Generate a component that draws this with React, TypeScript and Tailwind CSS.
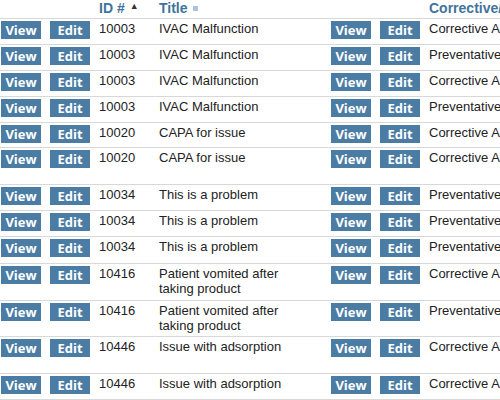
const rows = [
  { id: '10003', title: 'IVAC Malfunction', type: 'Corrective Action', h: 'h-[26px]' },
  { id: '10003', title: 'IVAC Malfunction', type: 'Preventative Action', h: 'h-[26px]' },
  { id: '10003', title: 'IVAC Malfunction', type: 'Corrective Action', h: 'h-[26px]' },
  { id: '10003', title: 'IVAC Malfunction', type: 'Preventative Action', h: 'h-[26px]' },
  { id: '10020', title: 'CAPA for issue', type: 'Corrective Action', h: 'h-[25px]' },
  { id: '10020', title: 'CAPA for issue', type: 'Corrective Action', h: 'h-[37px]' },
  { id: '10034', title: 'This is a problem', type: 'Preventative Action', h: 'h-[26px]' },
  { id: '10034', title: 'This is a problem', type: 'Preventative Action', h: 'h-[26px]' },
  { id: '10034', title: 'This is a problem', type: 'Preventative Action', h: 'h-[27px]' },
  { id: '10416', title: 'Patient vomited after taking product', type: 'Corrective Action', h: 'h-[37px]' },
  { id: '10416', title: 'Patient vomited after taking product', type: 'Preventative Action', h: 'h-[36px]' },
  { id: '10446', title: 'Issue with adsorption', type: 'Corrective Action', h: 'h-[37px]' },
  { id: '10446', title: 'Issue with adsorption', type: 'Corrective Action', h: 'h-[26px]' },
]

function Btn({ label }: { label: string }) {
  return (
    <span
      className="mt-[1px] flex h-[18px] w-[40px] items-center justify-center bg-[#4b7ca3] text-[13px] font-bold leading-none text-white"
      style={{ fontFamily: '"Open Sans", "Liberation Sans", sans-serif' }}
    >
      {label}
    </span>
  )
}

export default function App() {
  return (
    <div
      className="h-[400px] w-[500px] overflow-hidden bg-white text-[13px] leading-[15px] text-[#222]"
      style={{ fontFamily: '"Liberation Sans", Arial, sans-serif' }}
    >
      <div className="w-[700px]">
        {/* header */}
        <div className="flex h-[19px] border-b border-[#d8d8d8] text-[14px] font-bold leading-[14px] text-[#41739c]">
          <div className="w-[98px] shrink-0" />
          <div className="flex w-[60px] shrink-0 items-start pl-[1px] pt-[1px]">
            ID #
            <span className="ml-[5px] mt-[1px] text-[9px] leading-[9px] text-[#333]">▲</span>
          </div>
          <div className="flex w-[172px] shrink-0 items-start pl-[1px] pt-[1px]">
            Title
            <span className="ml-[5px] mt-[5px] h-[5px] w-[5px] bg-[#a9c3da]" />
          </div>
          <div className="w-[98px] shrink-0" />
          <div className="shrink-0 pl-[1px] pt-[1px]">Corrective/Preventative</div>
        </div>

        {rows.map((r, i) => (
          <div key={i} className={'flex items-start border-b border-[#d8d8d8] pt-[1px] ' + r.h}>
            <div className="w-[49px] shrink-0 pl-[1px]"><Btn label="View" /></div>
            <div className="w-[49px] shrink-0 pl-[1px]"><Btn label="Edit" /></div>
            <div className="w-[60px] shrink-0 pl-[1px] pt-[1px]">{r.id}</div>
            <div className="w-[172px] shrink-0 pl-[1px] pr-[40px] pt-[1px]">{r.title}</div>
            <div className="w-[49px] shrink-0 pl-[1px]"><Btn label="View" /></div>
            <div className="w-[49px] shrink-0 pl-[1px]"><Btn label="Edit" /></div>
            <div className="shrink-0 pl-[1px] pt-[1px]">{r.type}</div>
          </div>
        ))}
      </div>
    </div>
  )
}
